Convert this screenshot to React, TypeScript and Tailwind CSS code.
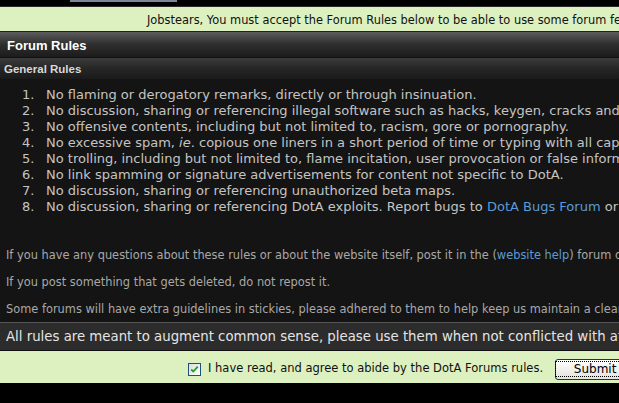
const rules: React.ReactNode[] = [
  'No flaming or derogatory remarks, directly or through insinuation.',
  'No discussion, sharing or referencing illegal software such as hacks, keygen, cracks and other warez.',
  'No offensive contents, including but not limited to, racism, gore or pornography.',
  <>
    No excessive spam, <i>ie</i>. copious one liners in a short period of time or typing with all caps.
  </>,
  'No trolling, including but not limited to, flame incitation, user provocation or false information.',
  'No link spamming or signature advertisements for content not specific to DotA.',
  'No discussion, sharing or referencing unauthorized beta maps.',
  <>
    No discussion, sharing or referencing DotA exploits. Report bugs to{' '}
    <span className="text-[#5b9bd5]">DotA Bugs Forum</span> or the proper section.
  </>,
];

export default function App() {
  return (
    <div className="w-[619px] h-[403px] overflow-hidden bg-black font-['DejaVu_Sans',Verdana,sans-serif]">
      {/* top strip */}
      <div className="h-[6px] bg-black pl-[70px]">
        <div className="w-[107px] h-[2px] bg-[#7d8699]" />
      </div>
      <div className="h-[1px] bg-[#2a2a2a]" />

      {/* notice */}
      <div className="h-[25px] bg-[#dcf0c0] border-b border-[#222] flex items-center pt-[4px] pl-[147px] whitespace-nowrap overflow-hidden text-[11.4px] text-[#111]">
        Jobstears, You must accept the Forum Rules below to be able to use some forum features.
      </div>

      {/* headers */}
      <div className="h-[26px] bg-gradient-to-b from-[#5c5c5c] via-[#2e2e2e] to-[#1c1c1c] border-b border-[#111] flex items-center pt-[3px] pl-[7px] text-[13px] font-bold text-white font-['Liberation_Sans',Arial,sans-serif]">
        Forum Rules
      </div>
      <div className="h-[21px] bg-gradient-to-b from-[#3c3c3c] via-[#262626] to-[#1a1a1a] flex items-center pt-[3px] pl-[4px] text-[11.5px] font-bold text-[#d8d8d8] font-['Liberation_Sans',Arial,sans-serif]">
        General Rules
      </div>

      {/* body */}
      <div className="bg-[#141414] h-[243px] pt-[8px] overflow-hidden">
        <ol className="pl-[22px] text-[13px] leading-[16px] text-[#c4c4c4] whitespace-nowrap">
          {rules.map((r, i) => (
            <li key={i} className="flex">
              <span className="w-[24px] shrink-0">{i + 1}.</span>
              <span>{r}</span>
            </li>
          ))}
        </ol>
        <div className="pl-[6px] text-[11.4px] text-[#a8a8a8] whitespace-nowrap mt-[33px] flex flex-col gap-[12px] leading-[15px]">
          <p>
            If you have any questions about these rules or about the website itself, post it in the (
            <span className="text-[#5b9bd5]">website help</span>) forum or contact a moderator.
          </p>
          <p>If you post something that gets deleted, do not repost it.</p>
          <p>Some forums will have extra guidelines in stickies, please adhered to them to help keep us maintain a clean forum.</p>
        </div>
      </div>

      {/* footer note */}
      <div className="h-[29px] bg-[#2c2c2c] border-t border-[#555] border-b border-b-[#111] flex items-center pl-[6px] text-[13.3px] text-[#e4e4e4] whitespace-nowrap overflow-hidden">
        All rules are meant to augment common sense, please use them when not conflicted with after all.
      </div>

      {/* agree */}
      <div className="h-[32px] bg-[#dcf0c0] flex items-center pt-[4px] pl-[188px] whitespace-nowrap overflow-hidden text-[11.5px] text-[#111]">
        <span className="w-[13px] h-[13px] border border-[#1c5180] bg-gradient-to-br from-[#dcdcd7] to-white flex items-center justify-center shrink-0">
          <svg viewBox="0 0 11 11" className="w-[9px] h-[9px]">
            <path d="M1.5 5.5 L4 8 L9.5 2" stroke="#21a121" strokeWidth="2.2" fill="none" />
          </svg>
        </span>
        <span className="ml-[7px]">I have read, and agree to abide by the DotA Forums rules.</span>
        <button className="ml-[12px] h-[21px] w-[80px] shrink-0 rounded-[3px] border border-[#003c74] bg-gradient-to-b from-white to-[#e3e3dc] text-[12px] text-black flex items-center justify-center px-[3px]">
          <span className="border border-dotted border-black px-[18px] leading-[14px]">Submit</span>
        </button>
      </div>
    </div>
  );
}
